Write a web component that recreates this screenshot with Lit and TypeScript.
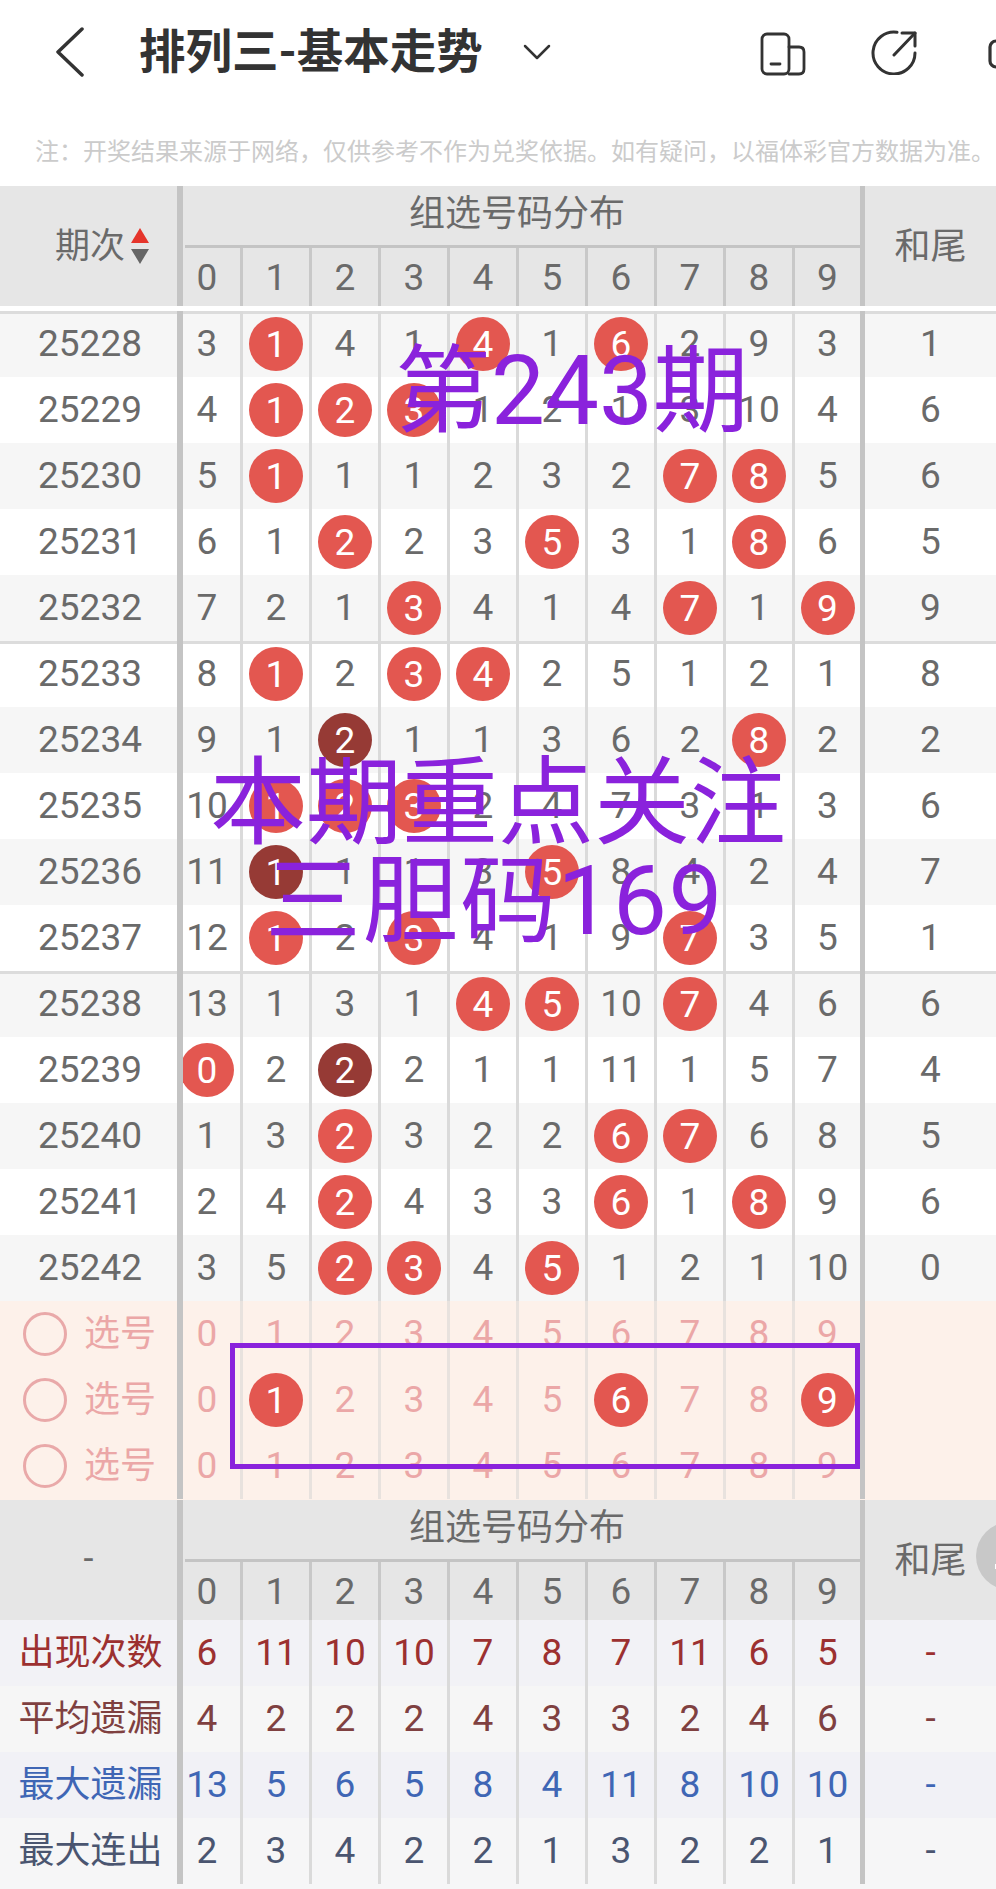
import { LitElement, html, css } from "lit";
import { customElement } from "lit/decorators.js";

const ROWS: [string, string, string][] = [
  ["25228", "3 *1 4 1 *4 1 *6 2 9 3", "1"],
  ["25229", "4 *1 *2 *3 1 2 1 3 10 4", "6"],
  ["25230", "5 *1 1 1 2 3 2 *7 *8 5", "6"],
  ["25231", "6 1 *2 2 3 *5 3 1 *8 6", "5"],
  ["25232", "7 2 1 *3 4 1 4 *7 1 *9", "9"],
  ["25233", "8 *1 2 *3 *4 2 5 1 2 1", "8"],
  ["25234", "9 1 #2 1 1 3 6 2 *8 2", "2"],
  ["25235", "10 *1 *2 *3 2 4 7 3 1 3", "6"],
  ["25236", "11 #1 1 1 3 *5 8 4 2 4", "7"],
  ["25237", "12 *1 2 *3 4 1 9 *7 3 5", "1"],
  ["25238", "13 1 3 1 *4 *5 10 *7 4 6", "6"],
  ["25239", "*0 2 #2 2 1 1 11 1 5 7", "4"],
  ["25240", "1 3 *2 3 2 2 *6 *7 6 8", "5"],
  ["25241", "2 4 *2 4 3 3 *6 1 *8 9", "6"],
  ["25242", "3 5 *2 *3 4 *5 1 2 1 10", "0"],
];

const SELECT = [
  "0 1 2 3 4 5 6 7 8 9",
  "0 *1 2 3 4 5 *6 7 8 *9",
  "0 1 2 3 4 5 6 7 8 9",
];

const STATS: [string, string, string][] = [
  ["出现次数", "6 11 10 10 7 8 7 11 6 5", "s1"],
  ["平均遗漏", "4 2 2 2 4 3 3 2 4 6", "s2"],
  ["最大遗漏", "13 5 6 5 8 4 11 8 10 10", "s3"],
  ["最大连出", "2 3 4 2 2 1 3 2 2 1", "s4"],
];

@customElement("app-root")
export class AppRoot extends LitElement {
  static styles = css`
    :host {
      display: block;
      position: relative;
      width: 996px;
      height: 1889px;
      overflow: hidden;
      background: #fff;
      font-family: Roboto, "Noto Sans CJK SC", sans-serif;
      color: #6a6a6a;
      font-size: 37px;
    }
    .bar {
      display: flex;
      align-items: center;
      height: 104px;
      padding-left: 55px;
      box-sizing: border-box;
    }
    .bar svg { flex: none; display: block; fill: none; stroke: #333; stroke-linecap: round; stroke-linejoin: round; }
    .title {
      flex: none;
      margin-left: 54px;
      width: 384px;
      font-size: 46.5px;
      font-weight: 700;
      color: #333;
      white-space: nowrap;
      line-height: 1;
    }
    .chev { margin-right: 209px; }
    .ic1 { margin-top: 4px; }
    .ic2 { margin-left: 63px; }
    .ic3 { margin-left: 71px; margin-top: 3px; }
    .note {
      height: 82px;
      padding: 33px 0 0 35px;
      box-sizing: border-box;
      font-size: 24px;
      line-height: 30px;
      color: #cbcbcb;
      white-space: nowrap;
    }
    .head {
      display: grid;
      grid-template-columns: 183px 1fr 136px;
      height: 120px;
      background: #e6e6e6;
      font-size: 36px;
    }
    .hl {
      border-right: 6px solid #c4c4c4;
      display: flex;
      align-items: center;
      justify-content: center;
      padding-bottom: 3px;
    }
    .hl.sorted {
      justify-content: flex-start;
      padding: 0 0 0 55px;
      gap: 6px;
      font-size: 35px;
    }
    .hl.sorted > span:first-child { padding-bottom: 7px; }
    .hr {
      border-left: 5px solid #c4c4c4;
      display: flex;
      align-items: center;
      justify-content: center;
      padding: 0 0 6px 0;
    }
    .hm { display: flex; flex-direction: column; }
    .gt {
      height: 59px;
      display: flex;
      align-items: center;
      justify-content: center;
      line-height: 1;
      padding: 0 9px 3px 0;
      box-sizing: border-box;
    }
    .dg {
      flex: 1;
      display: grid;
      grid-template-columns: 58px repeat(8, 69px) 65px;
      border-top: 3px solid #c4c4c4;
      margin-left: 2px;
      font-size: 37px;
    }
    .dg > span {
      display: flex;
      align-items: center;
      justify-content: center;
      border-right: 3px solid #c8c8c8;
    }
    .dg > span:first-child { padding-right: 11px; }
    .dg > span:last-child { border-right: 0; }
    .sort { display: flex; flex-direction: column; gap: 6px; }
    .sort i { display: block; width: 0; height: 0; border-left: 9px solid transparent; border-right: 9px solid transparent; }
    .up { border-bottom: 15px solid #e5352b; }
    .dn { border-top: 15px solid #666; }
    .gap { height: 5px; }
    .row {
      display: grid;
      grid-template-columns: 183px 60px repeat(8, 69px) 65px 136px;
      height: 66px;
      line-height: 1;
    }
    .row > * {
      display: flex;
      align-items: center;
      justify-content: center;
      box-sizing: border-box;
      border-right: 3px solid #dadada;
      min-width: 0;
    }
    .row > .tx { padding-bottom: 2px; }
    .row > .lab { border-right: 6px solid #c4c4c4; padding: 0 0 2px 3px; }
    .row > .c0 { padding-right: 9px; overflow: hidden; }
    .row > .c9 { border-right: 0; }
    .row > .end { border-right: 0; border-left: 5px solid #c4c4c4; padding-bottom: 2px; }
    .alt { background: #f6f6f6; }
    .plain { background: #fff; }
    .line > * { background: linear-gradient(#dcdcdc, #dcdcdc) top / 100% 3px no-repeat; }
    .ball {
      flex: none;
      width: 54px;
      height: 54px;
      border-radius: 50%;
      background: #e35750;
      color: #fff;
      display: flex;
      align-items: center;
      justify-content: center;
    }
    .ball.dark { background: #963a35; }
    .sel { background: #fdf1ea; color: #eba7a7; }
    .sel:last-child { height: 67px; padding-bottom: 1px; box-sizing: border-box; }
    .sel > * { border-right-color: #e8e2de; }
    .row.sel > .lab { gap: 17px; justify-content: flex-start; padding: 0 0 0 23px; font-size: 36px; }
    .ring { flex: none; width: 44px; height: 44px; border-radius: 50%; border: 3px solid #e9a9a9; box-sizing: border-box; }
    .s1 { background: #f2f2f6; color: #9c3030; }
    .s2 { background: #f6f6f6; color: #7f4040; }
    .s3 { background: #f1f1f6; color: #3f66b5; }
    .s4 { background: #f6f6f7; color: #4a5570; }
    .row.stat > .lab { padding: 0 0 0 4px; font-size: 36px; }
    .foot { height: 5px; background: #f6f6f7; }
    .ov {
      position: absolute;
      color: #8a22dc;
      font-size: 96px;
      line-height: 100px;
      white-space: nowrap;
    }
    .o1 { left: 395px; top: 341px; }
    .o2 { left: 210px; top: 753px; }
    .o3 { left: 265px; top: 851px; letter-spacing: 1.5px; }
    .box {
      position: absolute;
      left: 230px;
      top: 1343px;
      width: 630px;
      height: 126px;
      box-sizing: border-box;
      border: 5px solid #8a22dc;
    }
    .float { position: absolute; left: 976px; top: 1522px; width: 68px; height: 68px; border-radius: 50%; background: #c8c8c8; }
    .float i { position: absolute; left: 19px; top: 42px; width: 2px; height: 5px; background: #fff; }
  `;

  private cell(v: string, i: number) {
    const cls = `${i === 0 ? "c0" : ""} ${i === 9 ? "c9" : ""}`;
    if (v[0] === "*") return html`<span class=${cls}><span class="ball">${v.slice(1)}</span></span>`;
    if (v[0] === "#") return html`<span class=${cls}><span class="ball dark">${v.slice(1)}</span></span>`;
    return html`<span class="tx ${cls}">${v}</span>`;
  }

  private cells(s: string) {
    return s.split(" ").map((v, i) => this.cell(v, i));
  }

  private head(left: unknown, cls = "") {
    return html`<div class="head">
      <div class="hl ${cls}">${left}</div>
      <div class="hm">
        <div class="gt">组选号码分布</div>
        <div class="dg">${[0, 1, 2, 3, 4, 5, 6, 7, 8, 9].map((d) => html`<span>${d}</span>`)}</div>
      </div>
      <div class="hr">和尾</div>
    </div>`;
  }

  render() {
    return html`
      <div class="bar">
        <svg width="30" height="50" viewBox="0 0 30 50" stroke-width="3.5"><path d="M27 2 L3 25 L27 48" /></svg>
        <div class="title">排列三-基本走势</div>
        <svg class="chev" width="28" height="16" viewBox="0 0 28 16" stroke-width="2.5"><path d="M2 2 L14 14 L26 2" /></svg>
        <svg class="ic1" width="46" height="44" viewBox="0 0 46 44" stroke-width="2.8">
          <rect x="2" y="2" width="27" height="40" rx="5" />
          <path d="M29 15 H39 Q44 15 44 20 V37 Q44 42 39 42 H29" />
          <path d="M11 32 H20" />
        </svg>
        <svg class="ic2" width="48" height="46" viewBox="0 0 48 46" stroke-width="3">
          <path d="M28 3.2 A21 21 0 1 0 46 24" />
          <path d="M25 26 L46 4" />
          <path d="M33 4 H46 V17" />
        </svg>
        <svg class="ic3" width="34" height="30" viewBox="0 0 34 30" stroke-width="3.2"><rect x="2" y="2" width="30" height="26" rx="6" /></svg>
      </div>
      <div class="note">注：开奖结果来源于网络，仅供参考不作为兑奖依据。如有疑问，以福体彩官方数据为准。</div>
      ${this.head(html`<span>期次</span><span class="sort"><i class="up"></i><i class="dn"></i></span>`, "sorted")}
      <div class="gap"></div>
      ${ROWS.map(
        (r, i) => html`<div class="row ${i % 2 ? "plain" : "alt"} ${i % 5 === 0 ? "line" : ""}">
          <span class="lab">${r[0]}</span>${this.cells(r[1])}<span class="end">${r[2]}</span>
        </div>`
      )}
      <div>
        ${SELECT.map(
          (s) => html`<div class="row sel">
            <span class="lab"><span class="ring"></span>选号</span>${this.cells(s)}<span class="end"></span>
          </div>`
        )}
      </div>
      ${this.head(html`<span>-</span>`)}
      ${STATS.map(
        (s) => html`<div class="row stat ${s[2]}">
          <span class="lab">${s[0]}</span>${this.cells(s[1])}<span class="end">-</span>
        </div>`
      )}
      <div class="foot"></div>
      <div class="box"></div>
      <div class="float"><i></i></div>
      <div class="ov o1">第243期</div>
      <div class="ov o2">本期重点关注</div>
      <div class="ov o3">三胆码169</div>
    `;
  }
}
